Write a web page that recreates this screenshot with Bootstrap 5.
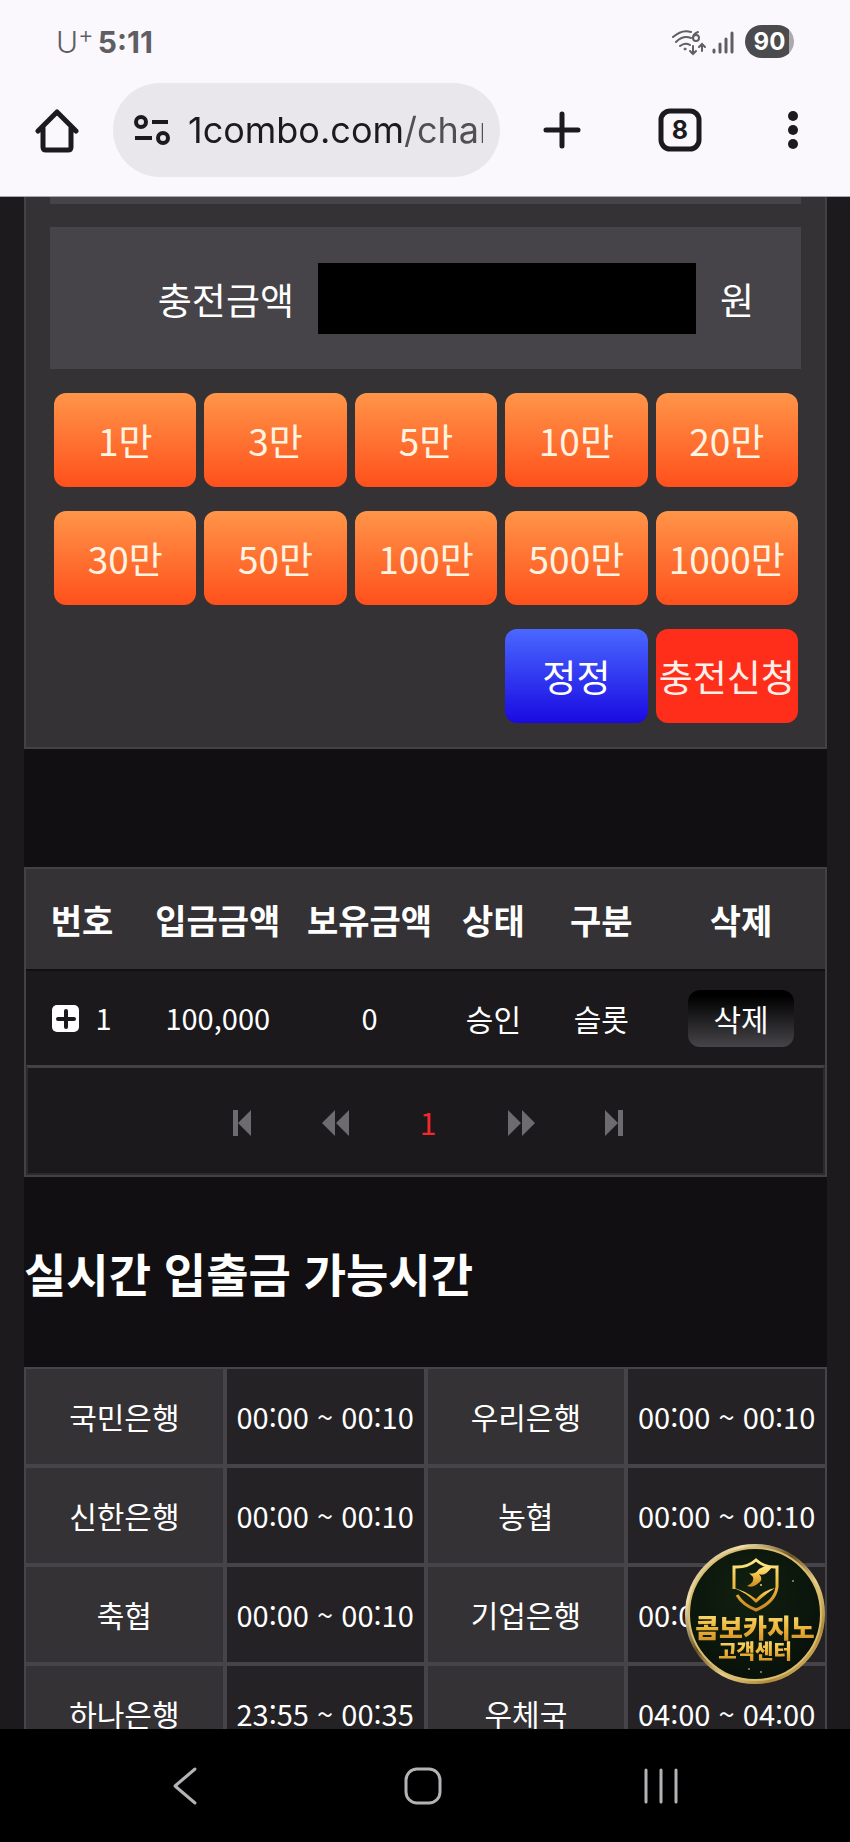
<!DOCTYPE html>
<html lang="ko">

<head>
    <meta charset="UTF-8">
    <meta name="viewport" content="width=device-width, initial-scale=1">
    <title>충전신청</title>
    <link href="https://cdn.jsdelivr.net/npm/bootstrap@5.3.2/dist/css/bootstrap.min.css" rel="stylesheet">
    <style>
        body {
            background-color: #1c1a1d;
            color: #fff;
            font-family: "Noto Sans CJK KR", sans-serif;
            font-size: 30px;
            min-height: 100vh;
        }

        svg {
            display: block;
        }

        /* browser chrome */
        .phone-top {
            background-color: #faf8fd;
            color: #1b1a1f;
            border-bottom: 1px solid #aaa9ad;
            font-family: Inter, sans-serif;
            height: 197px;
        }

        .status-bar {
            height: 83px;
            padding: 0 56px 0 56px;
            color: #5f5e62;
        }

        .carrier {
            font-size: 30px;
            font-weight: 300;
            line-height: 32px;
        }

        .carrier sup {
            font-size: 24px;
            top: -10px;
        }

        .clock {
            font-size: 30px;
            font-weight: 700;
            line-height: 32px;
        }

        .battery {
            width: 49px;
            height: 33px;
            border-radius: 17px;
            background: linear-gradient(90deg, #4b4a4d 90%, #aaa9ac 90%);
            color: #fff;
            font-size: 24px;
            font-weight: 700;
            line-height: 33px;
            margin-left: 10px;
        }

        .tool-bar {
            padding: 0 42px 0 34px;
        }

        .tool-btn {
            border: 0;
            padding: 0;
            background: none;
            color: inherit;
        }

        .address-pill {
            height: 94px;
            min-width: 0;
            border-radius: 47px;
            background-color: #e9e7ec;
            margin: 0 42px 0 34px;
            padding: 0 17px 0 19px;
            gap: 18px;
        }

        .address-input {
            border: 0;
            outline: 0;
            padding: 0;
            width: 0;
            min-width: 0;
            font-size: 36px;
            background: linear-gradient(90deg, #1b1a1f 215px, #505054 215px);
            -webkit-background-clip: text;
            background-clip: text;
            color: transparent;
        }

        .tool-group {
            gap: 76px;
        }

        .dots-btn {
            width: 30px;
        }

        /* page */
        .site-wrap {
            background-color: #110f12;
            margin: 0 23px 0 24px;
        }

        .charge-panel {
            background-color: #343234;
            border: 2px solid #434144;
            border-top: 0;
            padding: 0 24px 24px;
            margin-bottom: 118px;
        }

        .field-end {
            height: 7px;
            background-color: #464448;
            margin-bottom: 23px;
        }

        .amount-field {
            height: 142px;
            background-color: #464448;
            margin-bottom: 24px;
            font-size: 37px;
            gap: 24px;
        }

        .amount-field label {
            width: 30%;
            flex-grow: 1;
        }

        .amount-field input {
            width: 378px;
            height: 71px;
            border: 0;
            background-color: #000;
            color: #fff;
            padding: 0 16px;
        }

        .amount-unit {
            width: 81px;
        }

        .amount-grid {
            display: grid;
            grid-template-columns: repeat(5, 1fr);
            gap: 24px 8px;
            padding: 0 3px 0 4px;
        }

        .btn-amount {
            height: 94px;
            border: 0;
            border-radius: 12px;
            padding: 0;
            font-size: 37px;
            line-height: 94px;
            white-space: nowrap;
            color: #fff4e2;
            background: linear-gradient(#ff9548, #ff501c);
        }

        .btn-reset {
            grid-column: 4;
            color: #fff;
            background: linear-gradient(#4a68ff, #1a0ae2);
        }

        .btn-apply {
            color: #fff0ea;
            background: #ff2e1b;
        }

        .history-box {
            border: 2px solid #434144;
            background-color: #1b191c;
        }

        .history-table {
            width: 100%;
            table-layout: fixed;
            text-align: center;
        }

        .history-table th {
            height: 101px;
            background-color: #343234;
            border-bottom: 2px solid #110f12;
            font-size: 34px;
            font-weight: 700;
            white-space: nowrap;
        }

        .history-table td {
            height: 95px;
        }

        .history-table .num {
            font-size: 29px;
        }

        .btn-remove {
            width: 106px;
            height: 57px;
            border: 0;
            border-radius: 12px;
            padding: 0;
            color: #fff;
            font-size: 30px;
            line-height: 57px;
            background: linear-gradient(#000 10%, #464448);
        }

        .pager-box {
            height: 110px;
            border: 2px solid #2b2a2d;
            border-top: 3px solid #434144;
            padding: 4px 0 0 5px;
            color: #6d6b6f;
        }

        .pager-box a {
            width: 93px;
            color: inherit;
            text-decoration: none;
        }

        .pager-box a.current {
            color: #f5282d;
        }

        .hours-title {
            font-size: 46px;
            font-weight: 700;
            line-height: 66px;
            padding: 62px 0;
            margin: 0;
        }

        .hours-table {
            width: 100%;
            table-layout: fixed;
            border-collapse: separate;
            border-spacing: 0;
            text-align: center;
            white-space: nowrap;
        }

        .hours-table th,
        .hours-table td {
            height: 99px;
            padding: 0;
            border: 2px solid #464448;
            font-weight: 400;
        }

        .hours-table th {
            background-color: #343234;
        }

        .hours-table td {
            background-color: #242225;
            font-size: 29px;
        }

        .support-link {
            position: fixed;
            right: 24px;
            bottom: 157px;
            z-index: 1020;
        }

        .phone-nav {
            height: 113px;
            background-color: #000;
            color: #b3b2b6;
            padding: 0 70px 0 66px;
        }
    </style>
</head>

<body>
    <header class="phone-top sticky-top">
        <div class="status-bar d-flex align-items-center">
            <span class="carrier">U<sup>+</sup></span>
            <span class="clock ms-1">5:11</span>
            <svg class="ms-auto" width="36" height="28" viewBox="0 0 36 28" fill="none" stroke="currentColor" stroke-width="2" stroke-linecap="round">
                <path d="M2 9Q11 1 20 4M5 14Q12 7 20 10M9 18Q14 14 19 17" />
                <circle cx="14" cy="21" r="1" fill="currentColor" stroke-width="1" />
                <path d="M27 4Q22 6 22 10" />
                <circle cx="25" cy="10" r="3" />
                <path d="M22 18V26M19 23L22 26L25 23M31 23V16M28 19L31 16L34 19" />
            </svg>
            <svg class="ms-1" width="24" height="26" viewBox="0 0 24 26" stroke="currentColor" stroke-width="3" stroke-linecap="round">
                <path d="M3 21V23M9 15V23" />
                <path d="M15 10V23M21 4V23" />
            </svg>
            <span class="battery text-center">90</span>
        </div>
        <div class="tool-bar d-flex align-items-center">
            <button type="button" class="tool-btn" aria-label="홈">
                <svg width="45" height="45" viewBox="0 0 45 45" fill="none" stroke="currentColor" stroke-width="5" stroke-linecap="round" stroke-linejoin="round">
                    <path d="M4 23L23 4L42 23M9 18V39Q9 42 12 42H34Q37 42 37 39V18" />
                </svg>
            </button>
            <div class="address-pill d-flex align-items-center flex-fill">
                <svg class="flex-shrink-0" width="38" height="32" viewBox="0 0 38 32" fill="none" stroke="currentColor" stroke-width="4">
                    <circle cx="9" cy="8" r="5" />
                    <circle cx="31" cy="24" r="5" />
                    <path d="M20 8H36M3 24H20" />
                </svg>
                <input class="address-input flex-fill" type="text" value="1combo.com/char" aria-label="주소">
            </div>
            <div class="tool-group d-flex align-items-center">
                <button type="button" class="tool-btn" aria-label="새 탭">
                    <svg width="40" height="40" viewBox="0 0 40 40" stroke="currentColor" stroke-width="5" stroke-linecap="round">
                        <path d="M20 4V36M4 20H36" />
                    </svg>
                </button>
                <button type="button" class="tool-btn" aria-label="탭 8개">
                    <svg width="44" height="44" viewBox="0 0 44 44">
                        <rect x="3" y="3" width="38" height="38" rx="9" fill="none" stroke="currentColor" stroke-width="5" />
                        <text x="22" y="31" text-anchor="middle" font-size="25" font-weight="700" fill="currentColor">8</text>
                    </svg>
                </button>
                <button type="button" class="tool-btn dots-btn" aria-label="메뉴">
                    <svg width="30" height="40" viewBox="0 0 30 40" fill="currentColor">
                        <circle cx="15" cy="6" r="5" />
                        <circle cx="15" cy="20" r="5" />
                        <circle cx="15" cy="34" r="5" />
                    </svg>
                </button>
            </div>
        </div>
    </header>

    <main class="site-wrap">
        <form class="charge-panel">
            <div class="field-end"></div>
            <div class="amount-field d-flex align-items-center">
                <label for="amount" class="text-end pt-1">충전금액</label>
                <input type="text" id="amount">
                <span class="amount-unit pt-1">원</span>
            </div>
            <div class="amount-grid">
                <button type="button" class="btn btn-amount">1만</button>
                <button type="button" class="btn btn-amount">3만</button>
                <button type="button" class="btn btn-amount">5만</button>
                <button type="button" class="btn btn-amount">10만</button>
                <button type="button" class="btn btn-amount">20만</button>
                <button type="button" class="btn btn-amount">30만</button>
                <button type="button" class="btn btn-amount">50만</button>
                <button type="button" class="btn btn-amount">100만</button>
                <button type="button" class="btn btn-amount">500만</button>
                <button type="button" class="btn btn-amount">1000만</button>
                <button type="reset" class="btn btn-amount btn-reset">정정</button>
                <button type="submit" class="btn btn-amount btn-apply">충전신청</button>
            </div>
        </form>

        <section class="history-box">
            <table class="history-table">
                <colgroup>
                    <col style="width: 14%">
                    <col style="width: 20%">
                    <col style="width: 18%">
                    <col style="width: 13%">
                    <col style="width: 14%">
                    <col style="width: 21%">
                </colgroup>
                <thead>
                    <tr>
                        <th>번호</th>
                        <th>입금금액</th>
                        <th>보유금액</th>
                        <th>상태</th>
                        <th>구분</th>
                        <th>삭제</th>
                    </tr>
                </thead>
                <tbody>
                    <tr>
                        <td class="num">
                            <div class="d-flex align-items-center justify-content-center gap-3">
                                <button type="button" class="tool-btn text-white" aria-label="상세보기">
                                    <svg width="27" height="27" viewBox="0 0 27 27">
                                        <rect width="27" height="27" rx="5" fill="currentColor" />
                                        <path d="M14 6V22M6 14H22" stroke="#1b191c" stroke-width="4" stroke-linecap="round" />
                                    </svg>
                                </button>
                                <span>1</span>
                            </div>
                        </td>
                        <td class="num">100,000</td>
                        <td class="num">0</td>
                        <td>승인</td>
                        <td>슬롯</td>
                        <td><button type="button" class="btn btn-remove">삭제</button></td>
                    </tr>
                </tbody>
            </table>
            <nav class="pager-box d-flex align-items-center justify-content-center" aria-label="페이지">
                <a href="#" class="d-flex justify-content-center" aria-label="처음">
                    <svg width="18" height="26" viewBox="0 0 18 26" fill="currentColor">
                        <path d="M0 0H5V26H0ZM18 0V26L5 13Z" />
                    </svg>
                </a>
                <a href="#" class="d-flex justify-content-center" aria-label="이전">
                    <svg width="27" height="26" viewBox="0 0 27 26" fill="currentColor">
                        <path d="M13 0V26L0 13ZM27 0V26L14 13Z" />
                    </svg>
                </a>
                <a href="#" class="current text-center">1</a>
                <a href="#" class="d-flex justify-content-center" aria-label="다음">
                    <svg width="27" height="26" viewBox="0 0 27 26" fill="currentColor">
                        <path d="M0 0V26L13 13ZM14 0V26L27 13Z" />
                    </svg>
                </a>
                <a href="#" class="d-flex justify-content-center" aria-label="마지막">
                    <svg width="18" height="26" viewBox="0 0 18 26" fill="currentColor">
                        <path d="M0 0V26L13 13ZM13 0H18V26H13Z" />
                    </svg>
                </a>
            </nav>
        </section>

        <h2 class="hours-title">실시간 입출금 가능시간</h2>
        <table class="hours-table">
            <tbody>
                <tr>
                    <th>국민은행</th>
                    <td>00:00 ~ 00:10</td>
                    <th>우리은행</th>
                    <td>00:00 ~ 00:10</td>
                </tr>
                <tr>
                    <th>신한은행</th>
                    <td>00:00 ~ 00:10</td>
                    <th>농협</th>
                    <td>00:00 ~ 00:10</td>
                </tr>
                <tr>
                    <th>축협</th>
                    <td>00:00 ~ 00:10</td>
                    <th>기업은행</th>
                    <td>00:00 ~ 00:10</td>
                </tr>
                <tr>
                    <th>하나은행</th>
                    <td>23:55 ~ 00:35</td>
                    <th>우체국</th>
                    <td>04:00 ~ 04:00</td>
                </tr>
            </tbody>
        </table>
    </main>

    <a href="#" class="support-link" aria-label="콤보카지노 고객센터">
        <svg width="142" height="142" viewBox="-1 -1 142 142">
            <defs>
                <linearGradient id="ring" x1="0" y1="0" x2="1" y2="1">
                    <stop offset="0" stop-color="#a88a4c" />
                    <stop offset=".2" stop-color="#efe0b0" />
                    <stop offset=".42" stop-color="#6a5126" />
                    <stop offset=".6" stop-color="#e8cf8a" />
                    <stop offset=".8" stop-color="#b08a38" />
                    <stop offset="1" stop-color="#f0d98c" />
                </linearGradient>
                <linearGradient id="gold" x1="0" y1="0" x2="0" y2="1">
                    <stop offset="0" stop-color="#ffe98a" />
                    <stop offset=".5" stop-color="#f0b93c" />
                    <stop offset="1" stop-color="#c98722" />
                </linearGradient>
                <radialGradient id="disc" cx=".45" cy=".35" r=".7">
                    <stop offset="0" stop-color="#11200f" />
                    <stop offset="1" stop-color="#07100a" />
                </radialGradient>
            </defs>
            <circle cx="70" cy="70" r="68" fill="url(#disc)" stroke="url(#ring)" stroke-width="4" />
            <circle cx="70" cy="70" r="66" fill="none" stroke="#d9bd6c" stroke-width="2" />
            <!-- shield -->
            <path d="M49 45V23Q62 24 71 16Q80 24 92 23V43Q90 58 71 66Q58 61 52 51" fill="none" stroke="url(#gold)" stroke-width="3" />
            <path d="M46 43Q59 46 71 55Q79 46 90 44Q82 49 71 59Q61 48 46 43Z" fill="url(#gold)" />
            <path d="M87 23Q80 33 74 30Q80 36 71 41Q67 44 62 42Q70 38 68 33L64 29Q70 31 74 25Q80 21 87 23Z" fill="url(#gold)" />
            <circle cx="76" cy="41" r="1" fill="#f0d060" />
            <g font-family="Noto Sans CJK KR, sans-serif" font-weight="900" text-anchor="middle" fill="url(#gold)">
                <text x="70" y="94" font-size="26">콤보카지노</text>
                <text x="70" y="115" font-size="20">고객센터</text>
            </g>
            <g fill="#8f9a62">
                <circle cx="64" cy="125" r="1" />
                <circle cx="76" cy="128" r="1" />
                <circle cx="108" cy="37" r="1" />
            </g>
        </svg>
    </a>

    <nav class="phone-nav fixed-bottom d-flex align-items-center">
        <button type="button" class="tool-btn flex-fill d-flex justify-content-center w-100" aria-label="뒤로">
            <svg width="38" height="40" viewBox="0 0 38 40" fill="none" stroke="currentColor" stroke-width="3" stroke-linecap="round" stroke-linejoin="round">
                <path d="M29 3L9 20L29 37" />
            </svg>
        </button>
        <button type="button" class="tool-btn flex-fill d-flex justify-content-center w-100" aria-label="홈 화면">
            <svg width="40" height="40" viewBox="0 0 40 40" fill="none" stroke="currentColor" stroke-width="3">
                <rect x="3" y="3" width="34" height="34" rx="11" />
            </svg>
        </button>
        <button type="button" class="tool-btn flex-fill d-flex justify-content-center w-100" aria-label="최근 앱">
            <svg width="38" height="40" viewBox="0 0 38 40" stroke="currentColor" stroke-width="3" stroke-linecap="round">
                <path d="M4 4V36M19 4V36M34 4V36" />
            </svg>
        </button>
    </nav>

    <script src="https://cdn.jsdelivr.net/npm/bootstrap@5.3.2/dist/js/bootstrap.bundle.min.js"></script>
</body>

</html>
